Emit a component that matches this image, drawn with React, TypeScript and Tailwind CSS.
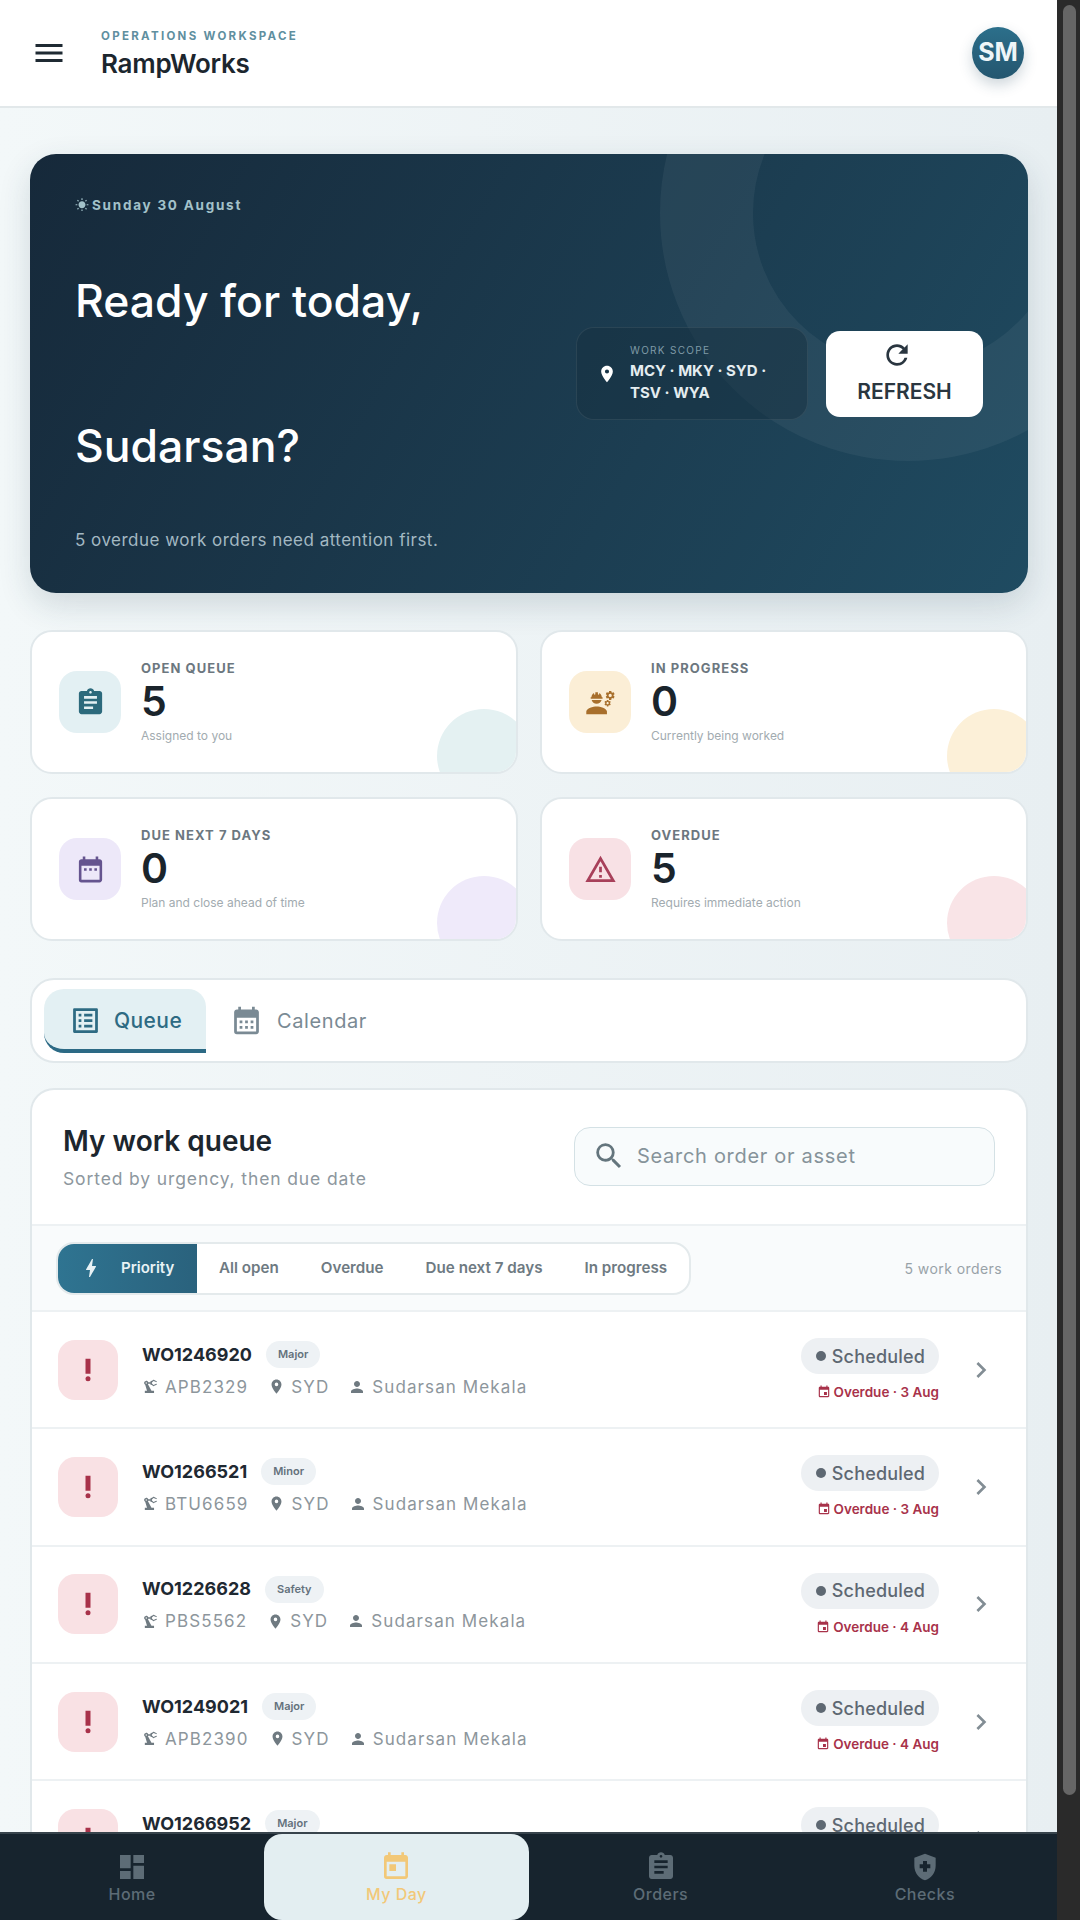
import React from "react";
import {
  MdAssignment,
  MdBolt,
  MdCalendarMonth,
  MdChevronRight,
  MdDashboard,
  MdDateRange,
  MdEngineering,
  MdEvent,
  MdHealthAndSafety,
  MdListAlt,
  MdLocationOn,
  MdMenu,
  MdOutlineWarningAmber,
  MdPerson,
  MdPrecisionManufacturing,
  MdPriorityHigh,
  MdRefresh,
  MdSearch,
  MdToday,
  MdWbSunny,
} from "react-icons/md";

const stats = [
  {
    label: "OPEN QUEUE",
    value: "5",
    note: "Assigned to you",
    icon: <MdAssignment size={31} className="text-[#2c6a7c]" />,
    tile: "bg-[#e3f0f3]",
    blob: "bg-[#e4f1f2]",
  },
  {
    label: "IN PROGRESS",
    value: "0",
    note: "Currently being worked",
    icon: <MdEngineering size={31} className="text-[#a86f2c]" />,
    tile: "bg-[#fbeed6]",
    blob: "bg-[#fcf0d8]",
  },
  {
    label: "DUE NEXT 7 DAYS",
    value: "0",
    note: "Plan and close ahead of time",
    icon: <MdDateRange size={31} className="text-[#65548f]" />,
    tile: "bg-[#ede8f9]",
    blob: "bg-[#efeafa]",
  },
  {
    label: "OVERDUE",
    value: "5",
    note: "Requires immediate action",
    icon: <MdOutlineWarningAmber size={33} className="text-[#a8405a]" />,
    tile: "bg-[#f8e1e5]",
    blob: "bg-[#f9e4e7]",
  },
];

const orders = [
  { id: "WO1246920", kind: "Major", asset: "APB2329", due: "Overdue · 3 Aug" },
  { id: "WO1266521", kind: "Minor", asset: "BTU6659", due: "Overdue · 3 Aug" },
  { id: "WO1226628", kind: "Safety", asset: "PBS5562", due: "Overdue · 4 Aug" },
  { id: "WO1249021", kind: "Major", asset: "APB2390", due: "Overdue · 4 Aug" },
  { id: "WO1266952", kind: "Major", asset: "BTU6650", due: "Overdue · 5 Aug" },
];

const filters = ["All open", "Overdue", "Due next 7 days", "In progress"];

const navItems = [
  { label: "Home", icon: <MdDashboard size={32} />, active: false },
  { label: "My Day", icon: <MdToday size={32} />, active: true },
  { label: "Orders", icon: <MdAssignment size={32} />, active: false },
  { label: "Checks", icon: <MdHealthAndSafety size={32} />, active: false },
];

const Header = () => (
  <header className="flex h-[108px] shrink-0 items-center border-b-2 border-[#e2e8ea] bg-white pl-[31px] pr-[33px]">
    <MdMenu size={36} className="text-[#1f2a33]" />
    <div className="ml-[34px] flex-1 pt-[2px]">
      <div className="text-[11.5px] font-bold leading-[12px] tracking-[0.2em] text-[#5f8fa0]">
        OPERATIONS WORKSPACE
      </div>
      <div className="mt-[7px] text-[26px] font-semibold leading-[30px] tracking-[-0.01em] text-[#1c262e]">
        RampWorks
      </div>
    </div>
    <div className="flex size-[52px] items-center justify-center rounded-full bg-gradient-to-b from-[#2c6f8b] to-[#24566f] text-[25px] font-bold text-[#eef6f8] shadow-[0_6px_14px_rgba(30,70,90,0.22)]">
      SM
    </div>
  </header>
);

const Hero = () => (
  <section className="relative flex h-[439px] items-center justify-between overflow-hidden rounded-[26px] bg-linear-120 from-[#16293a] to-[#1f4b61] pl-[45px] pr-[45px] shadow-[0_12px_32px_rgba(30,60,80,0.16)]">
    <div className="absolute left-[630px] top-[-189px] size-[496px] rounded-full border-[93px] border-[#ffffff0d]" />
    <div className="relative flex h-full flex-col pt-[42px]">
      <div className="flex h-[18px] items-center gap-[3px] text-[13.5px] font-bold tracking-[0.13em] text-[#a3c2ca]">
        <MdWbSunny size={14} />
        Sunday 30 August
      </div>
      <h1 className="mt-[51px] text-[44.5px] font-medium leading-[72.5px] text-white">
        Ready for today,
        <br />
        <br />
        Sudarsan?
      </h1>
      <p className="mt-[46px] text-[17px] leading-[22px] tracking-[0.028em] text-[#a3b8c2]">
        5 overdue work orders need attention first.
      </p>
    </div>
    <div className="relative flex items-center gap-[18px]">
      <div className="flex h-[93px] w-[232px] items-center rounded-[18px] border border-[#ffffff14] bg-[#16303f80] pl-[20px]">
        <MdLocationOn size={20} className="text-white" />
        <div className="ml-[13px]">
          <div className="text-[10px] leading-[12px] tracking-[0.13em] text-[#7f9aa6]">WORK SCOPE</div>
          <div className="mt-[4px] w-[160px] text-[15px] font-bold leading-[22px] text-[#e4edf0]">
            MCY · MKY · SYD · TSV · WYA
          </div>
        </div>
      </div>
      <button className="flex h-[86px] w-[157px] flex-col items-center rounded-[14px] bg-white pt-[8px] text-[#2a3640]">
        <MdRefresh size={32} className="mr-[16px]" />
        <span className="mt-[8px] text-[21px] font-semibold leading-[26px]">REFRESH</span>
      </button>
    </div>
  </section>
);

const StatCard = ({ stat }: { stat: (typeof stats)[number] }) => (
  <div className="relative flex h-[144px] items-center overflow-hidden rounded-[22px] border-2 border-[#e1e8eb] bg-white pl-[27px]">
    <div className={`absolute bottom-[-31px] right-[-15px] size-[94px] rounded-full ${stat.blob}`} />
    <div className={`flex size-[62px] items-center justify-center rounded-[18px] ${stat.tile}`}>{stat.icon}</div>
    <div className="relative ml-[20px]">
      <div className="text-[13px] font-bold leading-[16px] tracking-[0.08em] text-[#6c777f]">{stat.label}</div>
      <div className="mt-[3px] text-[41px] font-semibold leading-[44px] text-[#1a242c]">{stat.value}</div>
      <div className="mt-[5px] text-[12px] leading-[16px] text-[#a2abb0]">{stat.note}</div>
    </div>
  </div>
);

const Tabs = () => (
  <div className="mt-[37px] flex h-[85px] items-center rounded-[24px] border-2 border-[#e1e8eb] bg-white pl-[12px]">
    <div className="flex h-[64px] w-[162px] items-center rounded-[20px_18px_0_20px] border-b-4 border-[#2c6a85] bg-[#e3f0f3] pl-[25px] pt-[4px] text-[#2e6b83]">
      <MdListAlt size={33} />
      <span className="ml-[12px] text-[21px] font-medium tracking-[0.02em]">Queue</span>
    </div>
    <div className="ml-[24px] flex items-center text-[#7a8a94]">
      <MdCalendarMonth size={33} />
      <span className="ml-[14px] text-[20px] tracking-[0.03em]">Calendar</span>
    </div>
  </div>
);

const OrderRow = ({ order }: { order: (typeof orders)[number] }) => (
  <div className="flex h-[117.3px] shrink-0 items-center border-b-2 border-[#edf1f3] pl-[26px] pr-[29px]">
    <div className="flex size-[60px] items-center justify-center rounded-[17px] bg-[#f9e1e4]">
      <MdPriorityHigh size={30} className="text-[#a8324a]" />
    </div>
    <div className="ml-[24px]">
      <div className="flex items-center">
        <span className="text-[18px] font-bold leading-[28px] text-[#1f2932]">{order.id}</span>
        <span className="ml-[14px] rounded-full bg-[#eef2f5] px-[12px] py-[5px] text-[11px] font-semibold leading-[17px] text-[#64717c]">
          {order.kind}
        </span>
      </div>
      <div className="mt-[6px] flex items-center text-[17px] leading-[24px] tracking-[0.065em] text-[#8d969c]">
        <MdPrecisionManufacturing size={17} className="text-[#6f7a81]" />
        <span className="ml-[6px]">{order.asset}</span>
        <MdLocationOn size={17} className="ml-[20px] text-[#6f7a81]" />
        <span className="ml-[6px]">SYD</span>
        <MdPerson size={18} className="ml-[19px] text-[#6f7a81]" />
        <span className="ml-[6px]">Sudarsan Mekala</span>
      </div>
    </div>
    <div className="ml-auto flex flex-col items-end">
      <div className="flex h-[36px] items-center rounded-full bg-[#edf0f3] pl-[15px] pr-[14px] text-[18px] font-medium text-[#5e6872]">
        <span className="size-[10px] rounded-full bg-[#5e6872]" />
        <span className="ml-[6px] tracking-[0.01em]">Scheduled</span>
      </div>
      <div className="mt-[9px] flex items-center text-[13.5px] font-semibold leading-[18px] text-[#a8324a]">
        <MdEvent size={14} />
        <span className="ml-[3px]">{order.due}</span>
      </div>
    </div>
    <MdChevronRight size={32} className="ml-[26px] text-[#828d94]" />
  </div>
);

const WorkQueue = () => (
  <section className="mt-[25px] flex flex-col rounded-t-[24px] border-2 border-b-0 border-[#e1e8eb] bg-white">
    <div className="flex h-[136px] items-center justify-between border-b-2 border-[#edf1f3] pl-[31px] pr-[31px]">
      <div>
        <h2 className="text-[28px] font-semibold leading-[36px] text-[#1c262e]">My work queue</h2>
        <p className="mt-[8px] text-[17.5px] leading-[24px] tracking-[0.05em] text-[#8d979e]">
          Sorted by urgency, then due date
        </p>
      </div>
      <div className="mb-[2px] flex h-[59px] w-[421px] items-center rounded-[16px] border-[1.5px] border-[#d4e1e5] bg-[#f8fbfc] pl-[17px] text-[#86939a]">
        <MdSearch size={34} className="text-[#64757d]" />
        <span className="ml-[11px] text-[20px] tracking-[0.035em]">Search order or asset</span>
      </div>
    </div>
    <div className="flex h-[86px] items-center justify-between border-b-2 border-[#edf1f3] bg-[#f9fbfc] pl-[24px] pr-[24px]">
      <div className="flex h-[53px] items-center overflow-hidden rounded-[18px] border-2 border-[#e4eaec] bg-white">
        <div className="flex h-full w-[139px] items-center bg-gradient-to-r from-[#2f7491] to-[#2a627d] pl-[21px] text-[15px] font-semibold text-[#e8f2f5]">
          <MdBolt size={24} />
          <span className="ml-[18px]">Priority</span>
        </div>
        <div className="flex items-center gap-[42px] pl-[22px] pr-[22px] text-[15.2px] font-semibold text-[#6e7a82]">
          {filters.map((filter) => (
            <span key={filter}>{filter}</span>
          ))}
        </div>
      </div>
      <span className="text-[14px] tracking-[0.03em] text-[#98a2a8]">5 work orders</span>
    </div>
    {orders.map((order) => (
      <OrderRow key={order.id} order={order} />
    ))}
  </section>
);

const BottomNav = () => (
  <nav className="grid h-[88px] shrink-0 grid-cols-4 border-t-2 border-[#38444c] bg-[#17242e]">
    {navItems.map((item) => (
      <div
        key={item.label}
        className={`flex flex-col items-center justify-center rounded-[18px] pt-[2px] ${
          item.active ? "bg-[#e3eef1] text-[#f2c878]" : "text-[#5d6c76]"
        }`}
      >
        {item.icon}
        <span className="text-[16px] font-medium leading-[22px] tracking-[0.03em]">{item.label}</span>
      </div>
    ))}
  </nav>
);

const Scrollbar = () => (
  <div className="h-full w-[23px] shrink-0 bg-[#2a2a2a] pl-[6px] pr-[4px] pt-[5px]">
    <div className="h-[1790px] w-[13px] rounded-full bg-[#666666]" />
  </div>
);

export default function App() {
  return (
    <div className="flex h-[1920px] w-[1080px] overflow-hidden bg-[#2a2a2a] font-[family-name:Inter,sans-serif]">
      <div className="flex h-full w-[1057px] flex-col">
        <Header />
        <main className="flex-1 overflow-hidden bg-gradient-to-r from-[#f3f8f9] to-[#e8eff2] pl-[30px] pr-[29px] pt-[46px]">
          <Hero />
          <div className="mt-[37px] grid grid-cols-2 gap-x-[22px] gap-y-[23px]">
            {stats.map((stat) => (
              <StatCard key={stat.label} stat={stat} />
            ))}
          </div>
          <Tabs />
          <WorkQueue />
        </main>
        <BottomNav />
      </div>
      <Scrollbar />
    </div>
  );
}
